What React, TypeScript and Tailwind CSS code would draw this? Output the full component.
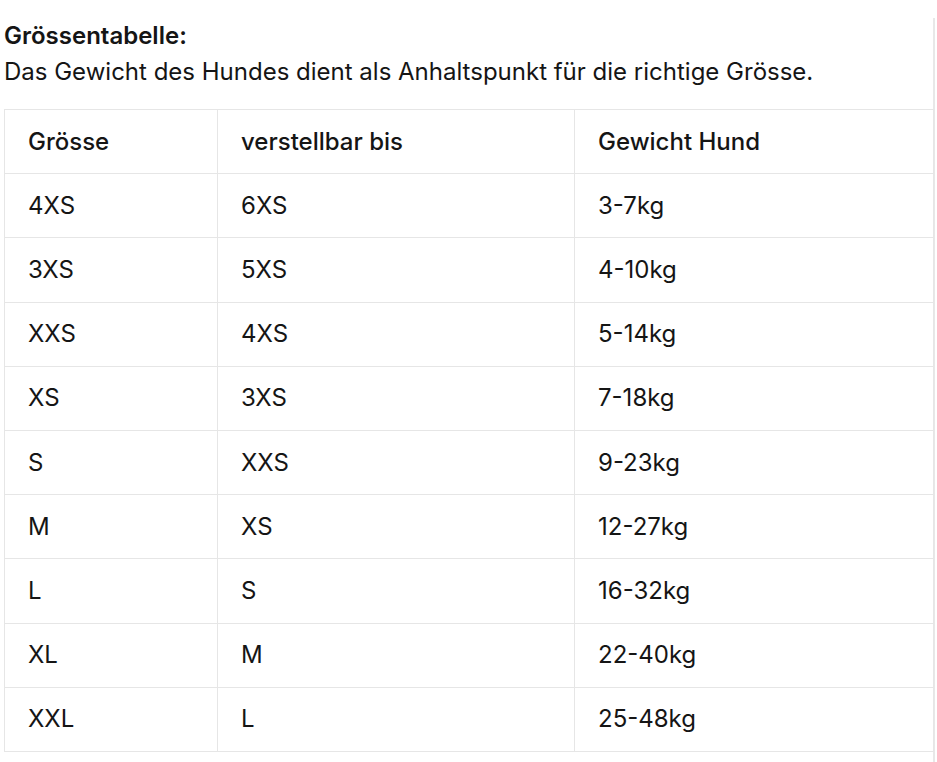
const rows: [string, string, string][] = [
  ["4XS", "6XS", "3-7kg"],
  ["3XS", "5XS", "4-10kg"],
  ["XXS", "4XS", "5-14kg"],
  ["XS", "3XS", "7-18kg"],
  ["S", "XXS", "9-23kg"],
  ["M", "XS", "12-27kg"],
  ["L", "S", "16-32kg"],
  ["XL", "M", "22-40kg"],
  ["XXL", "L", "25-48kg"],
];

export default function App() {
  return (
    <div
      className="bg-white text-[#151515] pt-[18px] min-h-[762px]"
      style={{ fontFamily: "Inter, 'Noto Sans', sans-serif" }}
    >
      <div className="w-[935px] border-r-2 border-[#e8e8e8] pl-[4px] pr-[0px]">
        <div className="text-[24px] leading-[36px] font-semibold">Grössentabelle:</div>
        <div className="text-[24px] leading-[36px]">
          Das Gewicht des Hundes dient als Anhaltspunkt für die richtige Grösse.
        </div>
        <table className="mt-[19px] w-[929px] border-collapse border border-[#e6e6e6] text-[24px] leading-[36px] table-fixed">
          <colgroup>
            <col className="w-[213px]" />
            <col className="w-[357px]" />
            <col className="w-[359px]" />
          </colgroup>
          <thead>
            <tr className="h-[64.2px]">
              <th className="border border-[#e6e6e6] pl-[23px] text-left font-medium">Grösse</th>
              <th className="border border-[#e6e6e6] pl-[23px] text-left font-medium">verstellbar bis</th>
              <th className="border border-[#e6e6e6] pl-[23px] text-left font-medium">Gewicht Hund</th>
            </tr>
          </thead>
          <tbody>
            {rows.map((r) => (
              <tr key={r[0]} className="h-[64.2px]">
                <td className="border border-[#e6e6e6] pl-[23px]">{r[0]}</td>
                <td className="border border-[#e6e6e6] pl-[23px]">{r[1]}</td>
                <td className="border border-[#e6e6e6] pl-[23px]">{r[2]}</td>
              </tr>
            ))}
          </tbody>
        </table>
        <div className="h-[11px]" />
      </div>
    </div>
  );
}
